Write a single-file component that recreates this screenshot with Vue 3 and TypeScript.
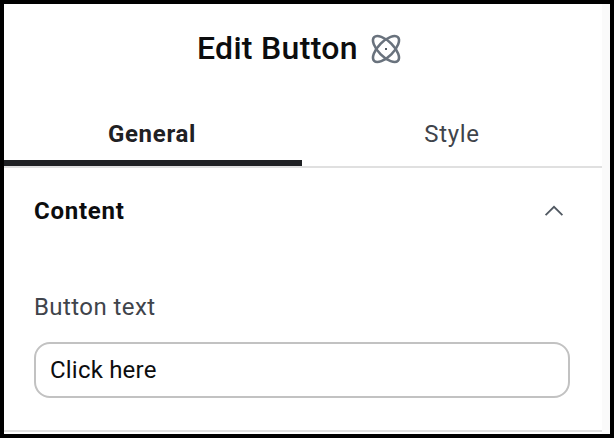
<script setup lang="ts">
import { ref } from 'vue'

type Tab = 'General' | 'Style'

const tabs: Tab[] = ['General', 'Style']
const activeTab = ref<Tab>('General')
const expanded = ref(true)
const buttonText = ref('Click here')
</script>

<template>
  <main class="frame">
    <div class="panel">
      <header class="header">
        <h1 class="title">Edit Button</h1>
        <svg class="atom" viewBox="0 0 32 32" aria-hidden="true">
          <ellipse cx="16" cy="16" rx="16.8" ry="7.5" transform="rotate(45 16 16)" />
          <ellipse cx="16" cy="16" rx="16.8" ry="7.5" transform="rotate(-45 16 16)" />
          <rect x="15" y="15" width="2" height="2" />
        </svg>
      </header>
      <nav class="tabs" role="tablist">
        <button
          v-for="tab in tabs"
          :key="tab"
          class="tab"
          :class="{ active: activeTab === tab }"
          role="tab"
          @click="activeTab = tab"
        >{{ tab }}</button>
      </nav>
      <section class="section">
        <button class="section-head" @click="expanded = !expanded">
          <span class="section-title">Content</span>
          <svg class="chevron" :class="{ closed: !expanded }" viewBox="0 0 20 12" aria-hidden="true">
            <path d="M1.6 10.2 10 1.8l8.4 8.4" />
          </svg>
        </button>
        <label v-if="expanded" class="field">
          <span class="label">Button text</span>
          <input v-model="buttonText" class="input" type="text" />
        </label>
      </section>
    </div>
  </main>
</template>

<style>
body {
  margin: 0;
}
</style>

<style scoped>
* {
  box-sizing: border-box;
}

.frame {
  width: 614px;
  height: 438px;
  border: 4px solid #000;
  padding-right: 8px;
  background: #fafafa;
  font-family: Roboto, "Liberation Sans", sans-serif;
  overflow: hidden;
}

.panel {
  height: 430px;
  background: #fff;
}

.header {
  display: flex;
  align-items: center;
  height: 90px;
  padding: 0 0 2px 193px;
  gap: 12px;
}

.title {
  margin: 0;
  width: 161px;
  font-size: 32px;
  line-height: 40px;
  font-weight: 500;
  letter-spacing: 0.3px;
  color: #0c0d0e;
  white-space: nowrap;
}

.atom {
  width: 32px;
  height: 32px;
  margin-top: 1px;
  overflow: visible;
  fill: none;
  stroke: #69727d;
  stroke-width: 2.6;
}

.atom rect {
  fill: #515962;
  stroke: none;
}

.tabs {
  display: flex;
  height: 74px;
  border-bottom: 2px solid #e0e0e0;
}

.tab {
  width: 298px;
  padding: 14px 0 0 2px;
  border: 0;
  border-bottom: 6px solid transparent;
  background: none;
  font: 400 24px/28px Roboto, "Liberation Sans", sans-serif;
  letter-spacing: 0.7px;
  color: #3f444b;
}

.tab.active {
  padding: 14px 2px 0 0;
  border-bottom-color: #1f2124;
  font-weight: 700;
  color: #1f2124;
}

.section {
  height: 264px;
  padding: 0 32px 0 30px;
  border-bottom: 2px solid #e0e0e0;
}

.section-head {
  display: flex;
  align-items: center;
  justify-content: space-between;
  width: 100%;
  height: 86px;
  padding: 0 6px 0 0;
  border: 0;
  background: none;
}

.section-title {
  font: 700 24px/28px Roboto, "Liberation Sans", sans-serif;
  letter-spacing: 0.75px;
  color: #0c0d0e;
}

.chevron {
  width: 20px;
  height: 12px;
  fill: none;
  stroke: #515962;
  stroke-width: 1.8;
}

.chevron.closed {
  transform: rotate(180deg);
}

.field {
  display: flex;
  flex-direction: column;
  padding-top: 39px;
  gap: 21px;
}

.label {
  font-size: 24px;
  line-height: 28px;
  letter-spacing: 0.42px;
  color: #3f444b;
}

.input {
  width: 100%;
  height: 56px;
  padding: 0 14px;
  border: 2px solid #c2c2c2;
  border-radius: 16px;
  outline: none;
  background: #fff;
  font: 400 24px/28px Roboto, "Liberation Sans", sans-serif;
  letter-spacing: 0.2px;
  color: #0c0d0e;
}
</style>
